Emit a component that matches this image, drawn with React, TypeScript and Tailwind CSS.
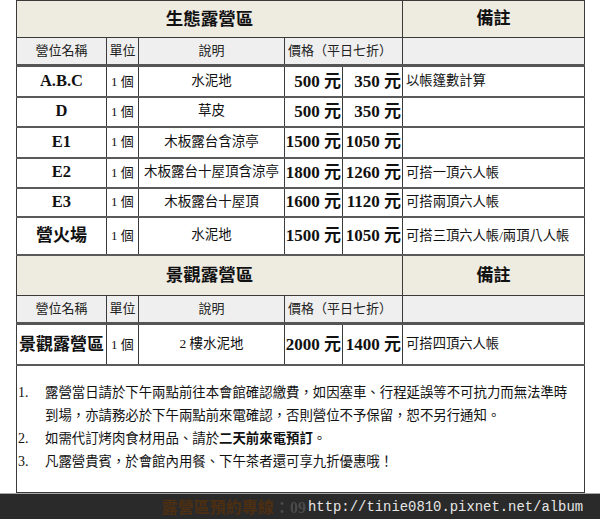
import React from "react";

type Site = { name: string; desc: string; p1: string; p2: string; note: string; h: string; cjk?: boolean };

const eco: Site[] = [
  { name: "A.B.C", desc: "水泥地", p1: "500", p2: "350", note: "以帳篷數計算", h: "h-[31px]" },
  { name: "D", desc: "草皮", p1: "500", p2: "350", note: "", h: "h-[30px]" },
  { name: "E1", desc: "木板露台含涼亭", p1: "1500", p2: "1050", note: "", h: "h-[31px]" },
  { name: "E2", desc: "木板露台十屋頂含涼亭", p1: "1800", p2: "1260", note: "可搭一頂六人帳", h: "h-[30px]" },
  { name: "E3", desc: "木板露台十屋頂", p1: "1600", p2: "1120", note: "可搭兩頂六人帳", h: "h-[29px]" },
  { name: "營火場", desc: "水泥地", p1: "1500", p2: "1050", note: "可搭三頂六人帳/兩頂八人帳", h: "h-[38px]", cjk: true },
];

const view: Site[] = [
  { name: "景觀露營區", desc: "2 樓水泥地", p1: "2000", p2: "1400", note: "可搭四頂六人帳", h: "h-[41px]", cjk: true },
];

const cell = "border border-[#3a3a3a] p-0";
const rowLine = "border-b-[2px] border-b-[#5a5a5a]";

function SectionHead({ title, h }: { title: string; h: string }) {
  return (
    <>
      <tr className={`${h} bg-[#eeebe1]`}>
        <td colSpan={5} className={`${cell} text-center text-[17.5px] font-bold text-[#111]`}>{title}</td>
        <td className={`${cell} text-center text-[17px] font-bold text-[#111]`}>備註</td>
      </tr>
      <tr className="h-[28px] bg-[#efefef] text-[13px] text-[#222]">
        <td className={`${cell} text-center border-b-[3px] border-b-[#555]`}>營位名稱</td>
        <td className={`${cell} text-center border-b-[3px] border-b-[#555]`}>單位</td>
        <td className={`${cell} text-center border-b-[3px] border-b-[#555]`}>說明</td>
        <td colSpan={2} className={`${cell} pl-[3px] text-left border-b-[3px] border-b-[#555]`}>價格（平日七折）</td>
        <td className={`${cell} border-b-[3px] border-b-[#555]`}></td>
      </tr>
    </>
  );
}

function SiteRow({ s }: { s: Site }) {
  return (
    <tr className={`${s.h} bg-white text-[#111]`}>
      <td className={`${cell} ${rowLine} text-center font-bold ${s.cjk ? "text-[17px]" : "text-[16.5px]"}`}>{s.name}</td>
      <td className={`${cell} ${rowLine} text-center text-[13px]`}>1 個</td>
      <td className={`${cell} ${rowLine} text-center text-[13.5px]`}>{s.desc}</td>
      <td className={`${cell} ${rowLine} text-right pr-[1px] text-[17px] font-bold whitespace-nowrap`}>{s.p1} 元</td>
      <td className={`${cell} ${rowLine} text-right pr-[1px] text-[17px] font-bold whitespace-nowrap`}>{s.p2} 元</td>
      <td className={`${cell} ${rowLine} pl-[3px] text-left text-[13.3px] whitespace-nowrap`}>{s.note}</td>
    </tr>
  );
}

export default function App() {
  return (
    <div className="h-[519px] w-[600px] overflow-hidden bg-white font-['Liberation_Serif','Noto_Sans_CJK_TC',serif]">
      <table className="ml-[16px] w-[568px] table-fixed border-collapse">
        <colgroup>
          <col className="w-[90px]" />
          <col className="w-[32px]" />
          <col className="w-[146px]" />
          <col className="w-[58px]" />
          <col className="w-[60px]" />
          <col className="w-[182px]" />
        </colgroup>
        <tbody>
          <SectionHead title="生態露營區" h="h-[37px]" />
          {eco.map((s) => (
            <SiteRow key={s.name} s={s} />
          ))}
          <SectionHead title="景觀露營區" h="h-[41px]" />
          {view.map((s) => (
            <SiteRow key={s.name} s={s} />
          ))}
          <tr className="h-[128px] bg-white">
            <td colSpan={6} className={`${cell} align-top pt-[15px] text-[13.4px] leading-[23px] text-[#111]`}>
              <div className="flex whitespace-nowrap">
                <span className="w-[28px] pl-[1px] text-[14px]">1.</span>
                <div>
                  <div>露營當日請於下午兩點前往本會館確認繳費，如因塞車、行程延誤等不可抗力而無法準時</div>
                  <div>到場，亦請務必於下午兩點前來電確認，否則營位不予保留，恕不另行通知。</div>
                </div>
              </div>
              <div className="flex whitespace-nowrap">
                <span className="w-[28px] pl-[1px] text-[14px]">2.</span>
                <div>
                  如需代訂烤肉食材用品、請於<span className="font-bold">二天前來電預訂</span>。
                </div>
              </div>
              <div className="flex whitespace-nowrap">
                <span className="w-[28px] pl-[1px] text-[14px]">3.</span>
                <div>凡露營貴賓，於會館內用餐、下午茶者還可享九折優惠哦！</div>
              </div>
            </td>
          </tr>
        </tbody>
      </table>
      <div className="h-[1px] bg-[#a8a8a8]"></div>
      <div className="flex h-[30px] items-start bg-[#2a2a2a] pt-[2px] whitespace-nowrap">
        <span className="ml-[162px] text-[16px] font-bold text-[#4e2f12] blur-[0.7px]">露營區預約專線</span>
        <span className="text-[16px] font-bold text-[#4a4a4a] blur-[0.7px]">：09</span>
        <span className="ml-[2px] font-['Liberation_Mono',monospace] text-[13.9px] leading-[22px] text-[#e6e6e6]">
          http://tinie0810.pixnet.net/album
        </span>
      </div>
    </div>
  );
}
